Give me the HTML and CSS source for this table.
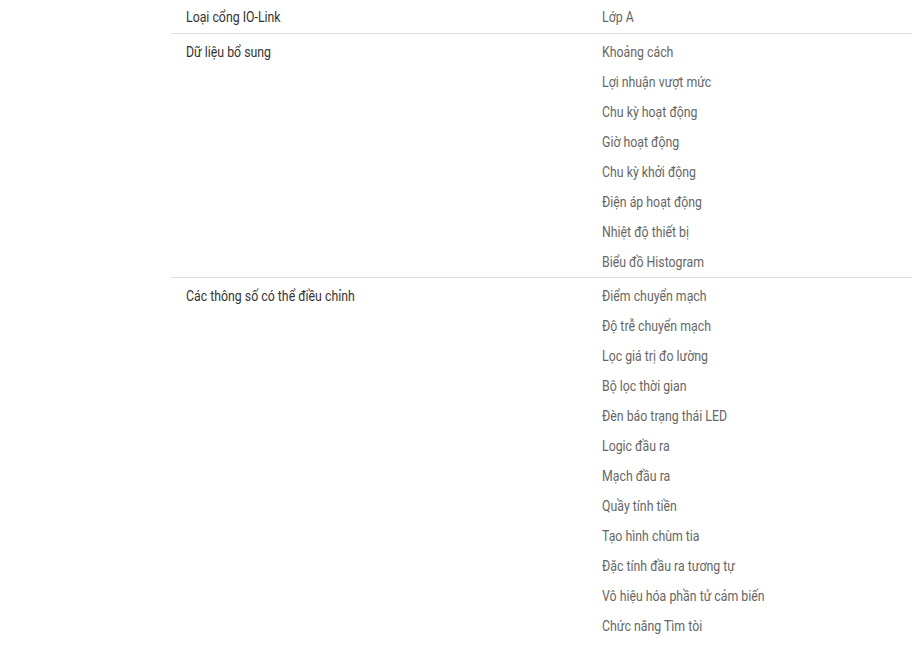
FILE: index.html
```html
<!DOCTYPE html>
<html lang="vi">
<head>
    <meta charset="UTF-8">
    <meta name="viewport" content="width=device-width, initial-scale=1.0">
    <title>Thông số IO-Link</title>
    <link rel="stylesheet" href="styles.css">
</head>
<body>
    <div class="spec-table">
        <div class="spec-row">
            <div class="spec-label"><span>Loại cổng IO-Link</span></div>
            <ul class="spec-values">
                <li><span>Lớp A</span></li>
            </ul>
        </div>

        <div class="spec-row">
            <div class="spec-label"><span>Dữ liệu bổ sung</span></div>
            <ul class="spec-values">
                <li><span>Khoảng cách</span></li>
                <li><span>Lợi nhuận vượt mức</span></li>
                <li><span>Chu kỳ hoạt động</span></li>
                <li><span>Giờ hoạt động</span></li>
                <li><span>Chu kỳ khởi động</span></li>
                <li><span>Điện áp hoạt động</span></li>
                <li><span>Nhiệt độ thiết bị</span></li>
                <li><span>Biểu đồ Histogram</span></li>
            </ul>
        </div>

        <div class="spec-row">
            <div class="spec-label"><span>Các thông số có thể điều chỉnh</span></div>
            <ul class="spec-values">
                <li><span>Điểm chuyển mạch</span></li>
                <li><span>Độ trễ chuyển mạch</span></li>
                <li><span>Lọc giá trị đo lường</span></li>
                <li><span>Bộ lọc thời gian</span></li>
                <li><span>Đèn báo trạng thái LED</span></li>
                <li><span>Logic đầu ra</span></li>
                <li><span>Mạch đầu ra</span></li>
                <li><span>Quầy tính tiền</span></li>
                <li><span>Tạo hình chùm tia</span></li>
                <li><span>Đặc tính đầu ra tương tự</span></li>
                <li><span>Vô hiệu hóa phần tử cảm biến</span></li>
                <li><span>Chức năng Tìm tòi</span></li>
            </ul>
        </div>
    </div>
</body>
</html>
```

FILE: styles.css
```css
body {
    margin: 0;
    font-family: Roboto, 'Liberation Sans', sans-serif;
    font-size: 14px;
    background: #fff;
    overflow: hidden;
}

.spec-table {
    margin-left: 171px;
}

.spec-row {
    display: grid;
    grid-template-columns: 416px 1fr;
    border-bottom: 1px solid #ddd;
}

/* condensed look: no Roboto Condensed offline */
.spec-label span,
.spec-values span {
    display: inline-block;
    transform: scaleX(0.88);
    transform-origin: left center;
    white-space: nowrap;
}

.spec-label {
    padding: 3px 15px 0;
    line-height: 30px;
    color: #333;
}

.spec-values {
    list-style: none;
    margin: 0;
    padding: 3px 15px 0;
    color: #666;
}

.spec-values li {
    line-height: 30px;
}

.spec-row:first-child .spec-label,
.spec-row:first-child .spec-values {
    padding-top: 2px;
    padding-bottom: 1px;
}

.spec-row:last-child {
    border-bottom: none;
}
```
